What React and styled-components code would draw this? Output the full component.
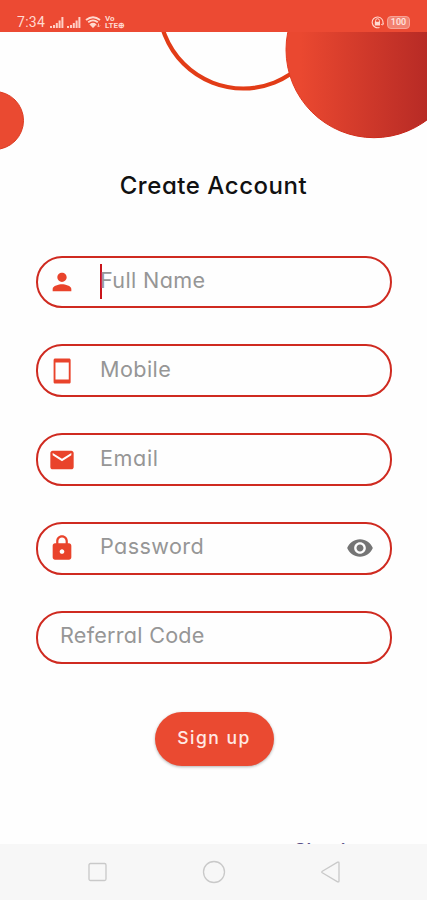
import styled, { createGlobalStyle } from "styled-components";

export default function App () {
  return (
    <Screen>
      <GlobalStyle />
      <StatusBar />
      <Main>
        <Decoration />
        <Title>Create Account</Title>
        <Form onSubmit={(e) => e.preventDefault()}>
          {fields.map((field) => (
            <Field key={field.label}>
              {field.icon && (
                <FieldIcon viewBox="0 0 24 24">
                  <path d={field.icon} />
                </FieldIcon>
              )}
              {field.focused && <Caret />}
              <Label $spacing={field.spacing}>{field.label}</Label>
              {field.secret && (
                <EyeIcon viewBox="0 0 24 24">
                  <path d={eyePath} />
                </EyeIcon>
              )}
            </Field>
          ))}
          <SignUpButton type="submit">Sign up</SignUpButton>
        </Form>
        <SignInLink>Sign in</SignInLink>
      </Main>
      <NavBar />
    </Screen>
  );
}

const eyePath = "M12 4.5C7 4.5 2.73 7.61 1 12c1.73 4.39 6 7.5 11 7.5s9.27-3.11 11-7.5c-1.73-4.39-6-7.5-11-7.5zM12 17c-2.76 0-5-2.24-5-5s2.24-5 5-5 5 2.24 5 5-2.24 5-5 5zm0-8c-1.66 0-3 1.34-3 3s1.34 3 3 3 3-1.34 3-3-1.34-3-3-3z";

const fields = [
  {
    label: "Full Name",
    spacing: "0.35px",
    focused: true,
    icon: "M12 12c2.21 0 4-1.79 4-4s-1.79-4-4-4-4 1.79-4 4 1.79 4 4 4zm0 2c-2.67 0-8 1.34-8 4v2h16v-2c0-2.66-5.33-4-8-4z"
  },
  {
    label: "Mobile",
    spacing: "0.4px",
    icon: "M18 1.2H6.2c-.8 0-1.4.6-1.4 1.4v18.8c0 .8.6 1.4 1.4 1.4H18c.8 0 1.4-.6 1.4-1.4V2.6c0-.8-.6-1.4-1.4-1.4zM17.8 19.2H6.4V4.8h11.4v14.4z"
  },
  {
    label: "Email",
    spacing: "0.6px",
    icon: "M20 4H4c-1.1 0-1.99.9-1.99 2L2 18c0 1.1.9 2 2 2h16c1.1 0 2-.9 2-2V6c0-1.1-.9-2-2-2zm0 4l-8 5-8-5V6l8 5 8-5v2z"
  },
  {
    label: "Password",
    spacing: "0.4px",
    secret: true,
    icon: "M18 8h-1V6c0-2.76-2.24-5-5-5S7 3.24 7 6v2H6c-1.1 0-2 .9-2 2v10c0 1.1.9 2 2 2h12c1.1 0 2-.9 2-2V10c0-1.1-.9-2-2-2zm-6 9c-1.1 0-2-.9-2-2s.9-2 2-2 2 .9 2 2-.9 2-2 2zm3.1-9H8.9V6c0-1.71 1.39-3.1 3.1-3.1 1.71 0 3.1 1.39 3.1 3.1v2z"
  },
  { label: "Referral Code", spacing: "0.25px" }
];

function StatusBar () {
  return (
    <Status>
      <StatusGroup>
        <Clock>7:34</Clock>
        <Signal />
        <Signal />
        <svg width="17" height="12" viewBox="0 0 17 12" fill="none" stroke="#ffd9d0">
          <path d="M1 4Q8 -1.5 15 4" strokeWidth="1.9" />
          <path d="M3.2 6.2Q8 2.5 12.8 6.2" strokeWidth="1.8" />
          <path d="M5.2 8.4Q8 6.2 10.8 8.4L8 11.2Z" strokeWidth="1.2" fill="#ffd9d0" />
          <path d="M13.5 7.5v3M12 9.5l1.5 1.5 1.5-1.5" strokeWidth=".8" />
        </svg>
        <Volte><span>Vo</span><span>LTE⊕</span></Volte>
      </StatusGroup>
      <StatusGroup>
        <svg width="13" height="13" viewBox="0 0 13 13" fill="none" stroke="#ffd9d0">
          <path d="M8.5 11.4A5.4 5.4 0 1 1 11.8 7.8" strokeWidth="1.1" />
          <path d="M10.2 8.3l1.5.7 1-1.7" strokeWidth="1" />
          <path d="M4.6 6V4.6a1.9 1.9 0 0 1 3.8 0V6" strokeWidth="1" />
          <path d="M3.8 5.8h5.2v3.7H3.8z" fill="#ffd9d0" stroke="none" />
        </svg>
        <Battery>100</Battery>
      </StatusGroup>
    </Status>
  );
}

function Signal () {
  return (
    <svg width="14" height="11" viewBox="0 0 14 11" fill="#ffd0c6">
      <path d="M0 9h2v2H0zM3 8h2v3H3zM5.8 6h2v5h-2zM8.6 3.5h2V11h-2zM11.4 0h2v11h-2z" />
    </svg>
  );
}

function Decoration () {
  return (
    <Circles viewBox="0 32 427 120">
      <defs>
        <linearGradient id="ball" x1="0" x2="1">
          <stop offset="0.08" stopColor="#ea4830" />
          <stop offset="0.82" stopColor="#b62a25" />
        </linearGradient>
        <linearGradient id="rim" x1="0" x2="1">
          <stop offset="0" stopColor="#e33b20" />
          <stop offset="1" stopColor="#b4130f" />
        </linearGradient>
      </defs>
      <circle cx="243.3" cy="4.2" r="84.3" fill="none" stroke="#e23c17" strokeWidth="4.2" />
      <circle cx="374" cy="49.7" r="88" fill="url(#ball)" stroke="url(#rim)" />
      <circle cx="-5.5" cy="120.5" r="29" fill="#ea4a31" stroke="#dc3a20" />
    </Circles>
  );
}

function NavBar () {
  return (
    <Nav>
      <NavIcon viewBox="0 0 24 24"><rect x="4" y="3.5" width="17" height="17" rx="1.5" /></NavIcon>
      <NavIcon viewBox="0 0 24 24"><circle cx="12" cy="12" r="10.5" /></NavIcon>
      <NavIcon viewBox="0 0 24 24"><path d="M4.3 11.2L19.6 2.2Q21 1.6 21 3.2V20.8Q21 22.4 19.6 21.8L4.3 12.8Q3.2 12 4.3 11.2Z" /></NavIcon>
    </Nav>
  );
}

const GlobalStyle = createGlobalStyle`
  * {
    box-sizing: border-box;
  }

  body {
    margin: 0;
    background: #fefefe;
    font-family: Inter, "Open Sans", sans-serif;
    font-feature-settings: "cv11";
  }
`

const Screen = styled.div`
  display: flex;
  flex-direction: column;
  height: 900px;
  overflow: hidden;
`

const Status = styled.header`
  display: flex;
  justify-content: space-between;
  flex: 0 0 32px;
  padding: 13px 17px 0 17px;
  background: #ec4a33;
  color: #ffd9d0;
`

const StatusGroup = styled.div`
  display: flex;
  align-items: center;
  gap: 3.5px;
  height: 18px;
`

const Clock = styled.span`
  width: 29px;
  font-family: Roboto, sans-serif;
  font-size: 14px;
  letter-spacing: 0.3px;
`

const Volte = styled.span`
  display: flex;
  flex-direction: column;
  font-family: Roboto, sans-serif;
  font-size: 8px;
  font-weight: 700;
  line-height: 7px;
`

const Battery = styled.span`
  width: 23px;
  height: 13px;
  border: 1px solid #f7a497;
  border-radius: 4px;
  background: #f28170;
  color: #ffe6e0;
  font-family: Roboto, sans-serif;
  font-size: 9px;
  font-weight: 500;
  line-height: 11px;
  text-align: center;
`

const Main = styled.main`
  position: relative;
  display: flex;
  flex-direction: column;
  flex: 1;
  min-height: 0;
  overflow: hidden;
`

const Circles = styled.svg`
  position: absolute;
  top: 0;
  left: 0;
  width: 427px;
  height: 120px;
`

const Title = styled.h1`
  margin: 138px 0 0;
  color: #111;
  font-size: 24px;
  font-weight: 500;
  line-height: 32px;
  letter-spacing: 0.55px;
  text-align: center;
`

const Form = styled.form`
  display: flex;
  flex-direction: column;
  gap: 36px;
  padding: 53.6px 35px 0 36px;
`

const Field = styled.div`
  display: flex;
  align-items: center;
  height: 52.8px;
  padding: 0 16px 0 10px;
  border: 2px solid #cf2a20;
  border-radius: 26px;
`

const FieldIcon = styled.svg`
  width: 28px;
  height: 28px;
  margin-right: 24px;
  fill: #e9432b;
`

const Caret = styled.span`
  width: 2px;
  height: 35px;
  margin-right: -2px;
  background: #c9151b;
`

const Label = styled.span`
  flex: 1;
  padding: 0 0 4px 12px;
  color: #969696;
  font-size: 21.6px;
  letter-spacing: ${(props) => props.$spacing};

  ${FieldIcon} ~ & {
    padding-left: 0;
  }
`

const EyeIcon = styled.svg`
  width: 28px;
  height: 28px;
  fill: #757575;
`

const SignUpButton = styled.button`
  align-self: center;
  width: 119px;
  height: 54px;
  margin-top: 12px;
  padding: 0 0 3px;
  border: none;
  border-radius: 27px;
  background: #ea4a31;
  box-shadow: 0 1px 3px rgba(0, 0, 0, 0.3);
  color: #ffe9e4;
  font: inherit;
  font-size: 17.5px;
  font-weight: 500;
  letter-spacing: 1.5px;
`

const SignInLink = styled.a`
  align-self: flex-end;
  margin: 73px 69px 0 0;
  color: #5a5288;
  font-size: 18px;
  font-weight: 600;
  line-height: 24px;
  letter-spacing: 0.7px;
`

const Nav = styled.nav`
  display: flex;
  justify-content: center;
  align-items: center;
  gap: 92.5px;
  flex: 0 0 56px;
  background: #f7f7f7;
`

const NavIcon = styled.svg`
  width: 24px;
  height: 24px;
  fill: none;
  stroke: #c9c9c9;
  stroke-width: 1.3;
`
